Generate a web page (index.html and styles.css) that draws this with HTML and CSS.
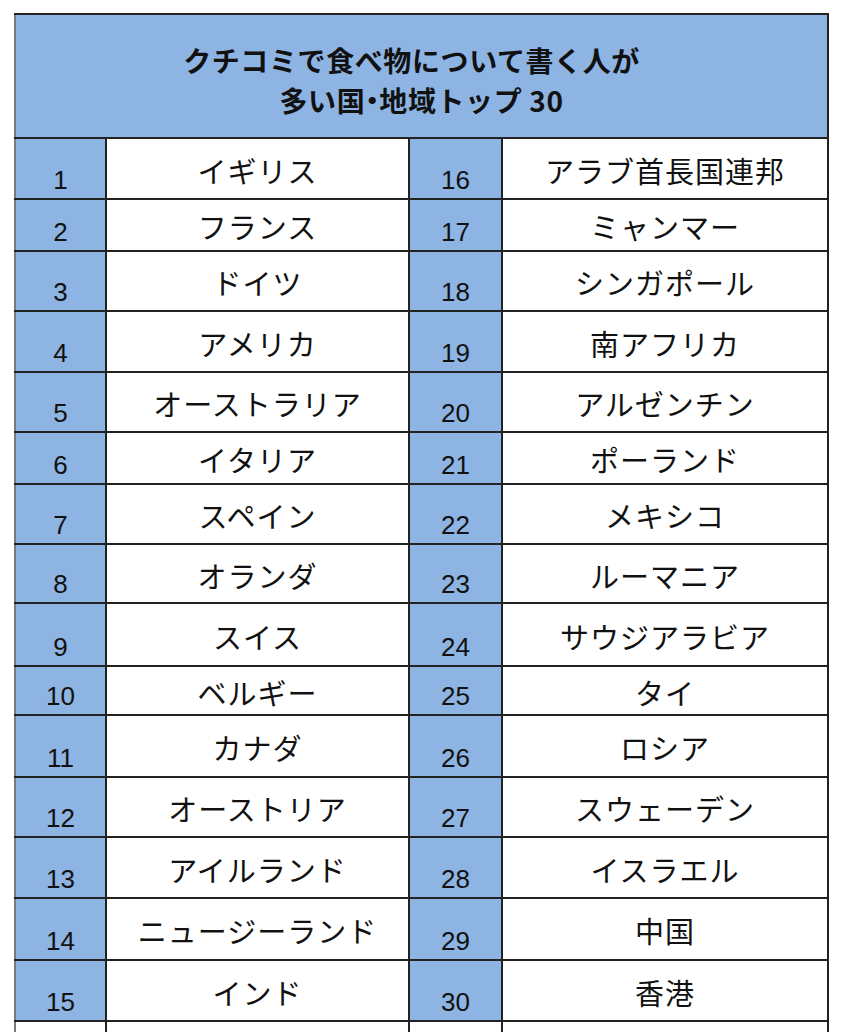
FILE: index.html
```html
<!DOCTYPE html>
<html lang="ja">
<head>
<meta charset="utf-8">
<link rel="stylesheet" href="styles.css">
</head>
<body>
<table class="rank">
  <colgroup>
    <col class="c-no"><col class="c-name"><col class="c-no2"><col class="c-name2">
  </colgroup>
  <thead>
    <tr class="head">
      <th colspan="4"><span class="line1">クチコミで食べ物について書く人が</span><br>多い国<span class="dot">・</span>地域トップ 30</th>
    </tr>
  </thead>
  <tbody>
    <tr class="h61"><td class="no">1</td><td class="nm">イギリス</td><td class="no">16</td><td class="nm">アラブ首長国連邦</td></tr>
    <tr class="h52"><td class="no">2</td><td class="nm">フランス</td><td class="no">17</td><td class="nm">ミャンマー</td></tr>
    <tr class="h60"><td class="no">3</td><td class="nm">ドイツ</td><td class="no">18</td><td class="nm">シンガポール</td></tr>
    <tr class="h61"><td class="no">4</td><td class="nm">アメリカ</td><td class="no">19</td><td class="nm">南アフリカ</td></tr>
    <tr class="h60"><td class="no">5</td><td class="nm">オーストラリア</td><td class="no">20</td><td class="nm">アルゼンチン</td></tr>
    <tr class="h52"><td class="no">6</td><td class="nm">イタリア</td><td class="no">21</td><td class="nm">ポーランド</td></tr>
    <tr class="h60"><td class="no">7</td><td class="nm">スペイン</td><td class="no">22</td><td class="nm">メキシコ</td></tr>
    <tr class="h59"><td class="no">8</td><td class="nm">オランダ</td><td class="no">23</td><td class="nm">ルーマニア</td></tr>
    <tr class="h63"><td class="no">9</td><td class="nm">スイス</td><td class="no">24</td><td class="nm">サウジアラビア</td></tr>
    <tr class="h49"><td class="no">10</td><td class="nm">ベルギー</td><td class="no">25</td><td class="nm">タイ</td></tr>
    <tr class="h62"><td class="no">11</td><td class="nm">カナダ</td><td class="no">26</td><td class="nm">ロシア</td></tr>
    <tr class="h60"><td class="no">12</td><td class="nm">オーストリア</td><td class="no">27</td><td class="nm">スウェーデン</td></tr>
    <tr class="h61"><td class="no">13</td><td class="nm">アイルランド</td><td class="no">28</td><td class="nm">イスラエル</td></tr>
    <tr class="h62"><td class="no">14</td><td class="nm">ニュージーランド</td><td class="no">29</td><td class="nm">中国</td></tr>
    <tr class="h61"><td class="no">15</td><td class="nm">インド</td><td class="no">30</td><td class="nm">香港</td></tr>
    <tr class="h61 tail"><td></td><td></td><td></td><td></td></tr>
  </tbody>
</table>
</body>
</html>
```

FILE: styles.css
```css
html, body {
  margin: 0;
  padding: 0;
  background: #ffffff;
  overflow: hidden;
  height: 1032px;
}

.rank {
  margin: 13px 0 0 14px;
  border-collapse: collapse;
  table-layout: fixed;
  width: 815px;
  color: #111111;
  font-family: "Noto Sans CJK JP", "Liberation Sans", sans-serif;
}

.c-no { width: 91px; }
.c-name { width: 303px; }
.c-no2 { width: 93px; }
.c-name2 { width: 326px; }

.rank th,
.rank td {
  border: 2px solid #222222;
  padding: 0;
}

.rank tr > :first-child {
  border-left-color: #7a7a7a;
}

.head th {
  height: 124px;
  background: #8db4e2;
  font-weight: 700;
  font-size: 28px;
  line-height: 40px;
  letter-spacing: 0.6px;
  text-align: center;
  vertical-align: middle;
  padding-top: 8px;
  box-sizing: border-box;
}

.line1 {
  margin-right: 20px;
}

.dot {
  font-feature-settings: "palt" 1;
  letter-spacing: 0;
}

.no {
  background: #8db4e2;
  font-family: "Liberation Sans", Arial, sans-serif;
  font-size: 26px;
  line-height: 30px;
  text-align: center;
  vertical-align: bottom;
  padding-bottom: 3px !important;
}

.nm {
  background: #ffffff;
  font-size: 29px;
  line-height: 34px;
  letter-spacing: 1px;
  text-align: center;
  vertical-align: middle;
  padding-top: 2px !important;
}

.tail td { background: #ffffff; }

.h49 { height: 49px; }
.h52 { height: 52px; }
.h59 { height: 59px; }
.h60 { height: 60px; }
.h61 { height: 61px; }
.h62 { height: 62px; }
.h63 { height: 63px; }
```
